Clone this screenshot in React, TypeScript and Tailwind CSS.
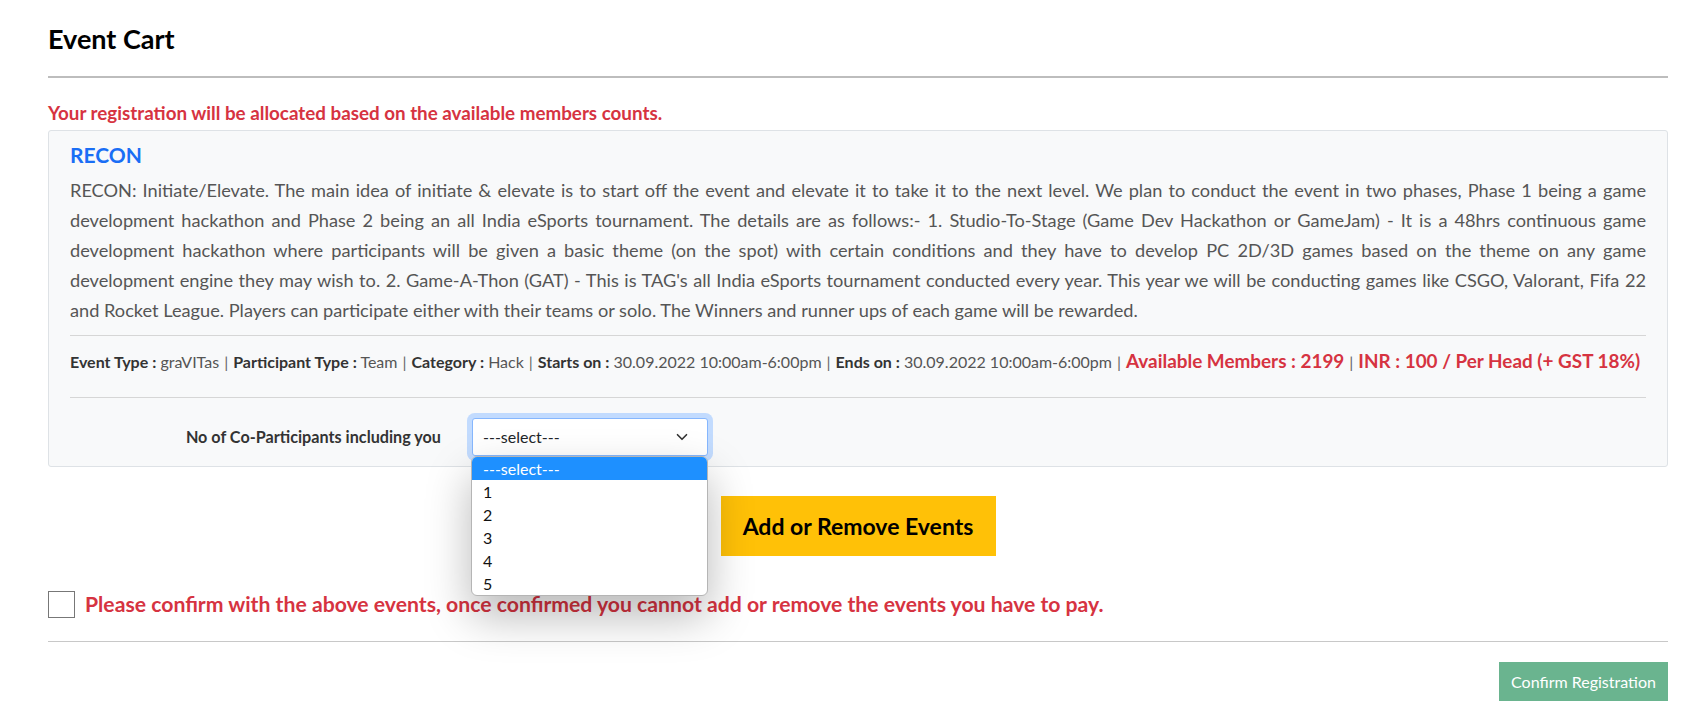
import { ChevronDown } from "lucide-react";

const description =
  "RECON: Initiate/Elevate. The main idea of initiate & elevate is to start off the event and elevate it to take it to the next level. We plan to conduct the event in two phases, Phase 1 being a game development hackathon and Phase 2 being an all India eSports tournament. The details are as follows:- 1. Studio-To-Stage (Game Dev Hackathon or GameJam) - It is a 48hrs continuous game development hackathon where participants will be given a basic theme (on the spot) with certain conditions and they have to develop PC 2D/3D games based on the theme on any game development engine they may wish to. 2. Game-A-Thon (GAT) - This is TAG's all India eSports tournament conducted every year. This year we will be conducting games like CSGO, Valorant, Fifa 22 and Rocket League. Players can participate either with their teams or solo. The Winners and runner ups of each game will be rewarded.";

const meta = [
  { label: "Event Type", value: "graVITas" },
  { label: "Participant Type", value: "Team" },
  { label: "Category", value: "Hack" },
  { label: "Starts on", value: "30.09.2022 10:00am-6:00pm" },
  { label: "Ends on", value: "30.09.2022 10:00am-6:00pm" },
];

const options = ["---select---", "1", "2", "3", "4", "5"];

export default function App() {
  return (
    <div className="min-h-screen bg-white pl-12 pr-[39px] pt-[22px] font-['Lato',sans-serif] text-[#212529]">
      <h1 className="text-[27px] font-bold leading-[34px] text-black">Event Cart</h1>
      <hr className="mt-[20px] border-t-2 border-[#bdbdbd]" />

      <p className="mt-[24px] text-[18.8px] font-bold leading-[22px] text-[#d63341]">
        Your registration will be allocated based on the available members counts.
      </p>

      <div className="mt-[6px] rounded-[3px] border border-[#dee2e6] bg-[#f8f9fa] px-[21px] pb-[10px] pt-[9px]">
        <h2 className="text-[21px] font-bold leading-[30px] text-[#1a6ef5]">RECON</h2>
        <p className="mt-[5px] text-justify text-[18.2px] leading-[30px] text-[#555]">{description}</p>

        <hr className="mt-[10px] border-[#d6d6d6]" />
        <div className="flex h-[61px] items-center pb-[11px] text-[16px] text-[#555]">
          <span>
            {meta.map((m, i) => (
              <span key={m.label}>
                {i > 0 && <span className="mx-[5px] text-[#666]">|</span>}
                <span className="font-bold text-[#333]">{m.label} :</span> {m.value}
              </span>
            ))}
            <span className="mx-[5px] text-[#666]">|</span>
            <span className="text-[18.9px] font-bold text-[#d63341]">Available Members : 2199</span>
            <span className="mx-[5px] text-[#666]">|</span>
            <span className="text-[18.9px] font-bold text-[#d63341]">INR : 100 / Per Head (+ GST 18%)</span>
          </span>
        </div>
        <hr className="border-[#d6d6d6]" />

        <div className="flex items-center pt-[20px]">
          <label className="w-[402px] pr-[31px] text-right text-[16.2px] font-bold text-[#333]">
            No of Co-Participants including you
          </label>
          <div className="relative">
            <div className="flex h-[38px] w-[236px] items-center justify-between rounded-[3px] border border-[#86b7fe] bg-white pl-[10px] pr-[16px] shadow-[0_0_0_5px_#c2dbfe]">
              <span className="text-[16px] text-[#212529]">---select---</span>
              <ChevronDown className="h-[18px] w-[18px] text-[#333]" strokeWidth={2.2} />
            </div>
            <ul className="absolute left-[-1px] top-[38px] z-10 w-[237px] overflow-hidden rounded-[6px] border border-[#b5b5b5] bg-white shadow-[0_20px_45px_rgba(0,0,0,0.28)]">
              {options.map((o, i) => (
                <li
                  key={o}
                  className={
                    i === 0
                      ? "h-[23px] bg-[#1e90ff] pl-[11px] text-[16px] leading-[23px] text-white"
                      : "h-[23px] pl-[11px] text-[16px] leading-[23px] text-[#111]"
                  }
                >
                  {o}
                </li>
              ))}
            </ul>
          </div>
        </div>
      </div>

      <div className="mt-[29px] flex justify-center">
        <button className="h-[60px] w-[275px] bg-[#ffc107] text-[23px] font-bold text-black">
          Add or Remove Events
        </button>
      </div>

      <div className="mt-[33px] flex h-[31px] items-center gap-[10px]">
        <span className="h-[27px] w-[27px] shrink-0 border-[1.5px] border-[#777] bg-white" />
        <span className="text-[21.2px] font-bold text-[#d63341]">
          Please confirm with the above events, once confirmed you cannot add or remove the events you have to pay.
        </span>
      </div>

      <hr className="mt-[21px] border-[#c8c8c8]" />

      <div className="mt-[20px] flex justify-end">
        <button className="h-[39px] w-[169px] bg-[#6ab48f] text-[16px] text-white">Confirm Registration</button>
      </div>
    </div>
  );
}
